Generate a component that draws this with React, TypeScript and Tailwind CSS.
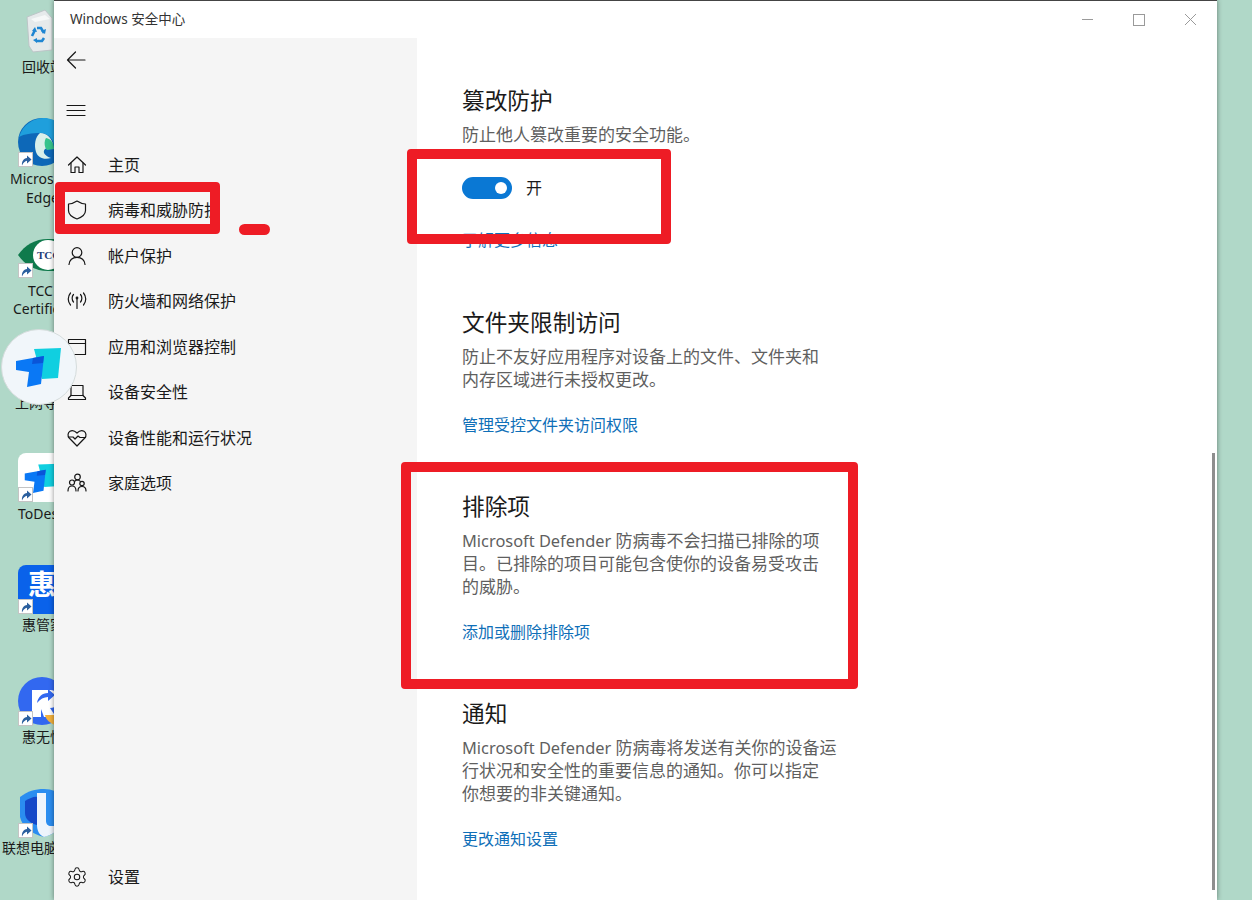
import React from 'react';
import { Settings } from 'lucide-react';

const Arrow = () => (
  <div className="absolute left-0 bottom-0 w-[15px] h-[15px] bg-white border border-[#c4c4c4] flex items-center justify-center">
    <svg width="12" height="12" viewBox="0 0 12 12">
      <path d="M2 11.500c-.5-4 1.500-7 5-7.500V1.500l4.500 4-4.500 4V6.800C5 7 3.300 8.800 2 11.500z" fill="#2a5f9e" />
    </svg>
  </div>
);

const DesktopLabel = ({ text, top, left }: { text: string; top: number; left: number }) => (
  <div className="absolute text-[14px] leading-[18px] text-[#1a1a1a] whitespace-nowrap" style={{ top, left }}>
    {text}
  </div>
);

const ToDeskMark = ({ size }: { size: number }) => (
  <svg width={size} height={size} viewBox="0 0 48 48">
    <path d="M19 6l27-1-3 30-16 1z" fill="#10cfe0" />
    <path d="M1 18l28-5-3 28-14 3 2-15-13-2z" fill="#0a78f5" />
    <path d="M18 15l11-2-1 7-11 1z" fill="#0a55d8" />
  </svg>
);

const Desktop = () => (
  <>
    {/* 回收站 */}
    <svg className="absolute left-[26px] top-[9px]" width="28" height="44" viewBox="0 0 28 44">
      <path d="M1 8L19 1l7 8v32l-19 2-4-6z" fill="#e6eaeb" stroke="#bcc5c7" />
      <path d="M5 10l14-4 5 4-15 3z" fill="#f6f8f8" />
      <g fill="none" stroke="#1f86d2" strokeWidth="2.600">
        <path d="M6 27l3-6M11 19h4l3 5M18 29l-2 3h-6" />
      </g>
      <path d="M15 22l4 3 1-5zM7 31l4-2 0 5zM6 22l5 1-2-5z" fill="#1f86d2" />
    </svg>
    <DesktopLabel text="回收站" top={58} left={22} />

    {/* Edge */}
    <div className="absolute left-[18px] top-[118px] w-[48px] h-[49px]">
      <svg width="48" height="48" viewBox="0 0 48 48">
        <circle cx="24" cy="24" r="24" fill="#0d68b8" />
        <path d="M1 19C5 6 16 0 26 0c12 0 22 9 22 22 0 5-5 9-12 9 1-9-5-16-14-16-8 0-16 1-21 4z" fill="#1f9fdc" />
        <path d="M22 15c7 0 12 5 13 12l-8 4c-3 3 0 7 6 9-7 2-13 0-15-6-2-7-1-15 4-19z" fill="#d9f0ea" />
        <path d="M28 20c5 1 8 5 8 11l-7 1c-3-3-3-9-1-12z" fill="#35c48c" />
      </svg>
      <Arrow />
    </div>
    <DesktopLabel text="Microsoft" top={170} left={10} />
    <DesktopLabel text="Edge" top={189} left={26} />

    {/* TCC */}
    <div className="absolute left-[18px] top-[239px] w-[48px] h-[39px]">
      <svg width="48" height="32" viewBox="0 0 48 32">
        <path d="M0 16C7 6 17 0 30 0h18v32H30C17 32 7 26 0 16z" fill="#0f7a4c" />
        <circle cx="30" cy="16" r="15" fill="#fff" />
        <text x="19" y="20" fontSize="11" fontWeight="700" fill="#1d3c78" fontFamily="Liberation Serif">TCC</text>
      </svg>
      <Arrow />
    </div>
    <DesktopLabel text="TCC" top={282} left={28} />
    <DesktopLabel text="Certificate" top={300} left={13} />

    {/* 上网导航 */}
    <DesktopLabel text="上网导" top={394} left={15} />

    {/* ToDesk */}
    <div className="absolute left-[18px] top-[453px] w-[48px] h-[49px] bg-white rounded-[8px] flex items-center justify-center">
      <ToDeskMark size={36} />
      <Arrow />
    </div>
    <DesktopLabel text="ToDesk" top={505} left={18} />

    {/* 惠管家 */}
    <div className="absolute left-[18px] top-[565px] w-[48px] h-[49px] bg-[#0a62ea] rounded-[8px] flex items-start justify-center pt-[5px] text-white text-[28px] font-bold leading-none">
      惠
      <Arrow />
    </div>
    <DesktopLabel text="惠管家" top={616} left={22} />

    {/* 惠无忧 */}
    <div className="absolute left-[18px] top-[677px] w-[48px] h-[49px]">
      <svg width="48" height="48" viewBox="0 0 48 48">
        <circle cx="24" cy="24" r="24" fill="#3268f0" />
        <path d="M14 13h18c6 0 9 4 9 9s-3 9-9 9l6 9H26l-3-8v8h-9z" fill="#fff" />
        <path d="M19 26c1-6 5-10 11-10v-4l7 6-7 6v-4c-4 0-8 2-11 6z" fill="#3268f0" />
        <path d="M27 38h20c-2 5-5 8-10 10-5-2-9-5-10-10z" fill="#f4b13c" />
      </svg>
      <Arrow />
    </div>
    <DesktopLabel text="惠无忧" top={728} left={22} />

    {/* 联想电脑管家 */}
    <div className="absolute left-[18px] top-[789px] w-[48px] h-[49px]">
      <svg width="48" height="48" viewBox="0 0 48 48">
        <path d="M2 8C10 2 17 0 26 0c8 0 14 3 20 7v22c0 10-10 16-20 19C14 45 4 38 2 28z" fill="#2b8df0" />
        <path d="M7 12c5-3 10-5 12-4v28c-7-2-12-6-12-12z" fill="#1548c8" />
        <path d="M19 4h9v28c0 3 2 5 5 5h9c-3 6-9 9-16 11-5-2-7-7-7-12z" fill="#eef4fc" />
      </svg>
      <Arrow />
    </div>
    <DesktopLabel text="联想电脑管家" top={839} left={2} />
  </>
);

const strokeProps = {
  fill: 'none',
  stroke: '#161616',
  strokeWidth: 1.2,
  strokeLinejoin: 'round' as const,
  strokeLinecap: 'round' as const,
};

const NavIcon = ({ children }: { children: React.ReactNode }) => (
  <svg width="20" height="20" viewBox="0 0 20 20" {...strokeProps}>
    {children}
  </svg>
);

const navItems: { label: string; icon: React.ReactNode }[] = [
  {
    label: '主页',
    icon: (
      <>
        <path d="M1.500 10L10 2l8.500 8" />
        <path d="M4 8v9.500h4v-5.500h4v5.500h4V8" />
      </>
    ),
  },
  {
    label: '病毒和威胁防护',
    icon: <path d="M10 1c3 2 5.800 2.800 8.500 3v6.500c0 4-3.800 6.800-8.500 8.500-4.700-1.700-8.500-4.500-8.500-8.500V4C4.200 3.800 7 3 10 1z" />,
  },
  {
    label: '帐户保护',
    icon: (
      <>
        <circle cx="10" cy="6.500" r="4.800" />
        <path d="M2 18.500c.5-4.500 3.500-7.200 8-7.200s7.500 2.700 8 7.200" />
      </>
    ),
  },
  {
    label: '防火墙和网络保护',
    icon: (
      <>
        <path d="M10 7.500v10" />
        <circle cx="10" cy="7" r=".8" />
        <path d="M6.500 3.500c-1.800 2-1.800 5.500 0 7.500M13.500 3.500c1.800 2 1.800 5.500 0 7.500" />
        <path d="M3.500 2c-3 3.500-3 8.500 0 12M16.500 2c3 3.500 3 8.500 0 12" />
      </>
    ),
  },
  {
    label: '应用和浏览器控制',
    icon: (
      <>
        <rect x="1.500" y="2.500" width="17" height="15" />
        <path d="M1.500 6.500h17" />
      </>
    ),
  },
  {
    label: '设备安全性',
    icon: (
      <>
        <path d="M4 3.500h12v10H4z" />
        <path d="M4 13.500l-2.500 2.500v1.500h17V16L16 13.500" />
      </>
    ),
  },
  {
    label: '设备性能和运行状况',
    icon: (
      <>
        <path d="M10 18L2.200 10C.3 8 .8 4.500 3 3.200 5.500 1.800 8 3 10 5c2-2 4.500-3.200 7-1.800 2.200 1.300 2.700 4.800.8 6.800z" />
        <path d="M1.500 9H6l2 2 3-3 2 1.500h5.500" />
      </>
    ),
  },
  {
    label: '家庭选项',
    icon: (
      <>
        <circle cx="10.500" cy="4" r="2.800" />
        <circle cx="5" cy="9.500" r="2.500" />
        <circle cx="15" cy="10.500" r="2.200" />
        <path d="M1 18c0-3 1.500-5 4-5s4 2 4 5M11 18c0-2.500 1.500-4.500 4-4.500s4 2 4 4.500" />
        <path d="M8 8c.7-.7 1.500-1 2.500-1 1 0 2 .4 2.800 1.300" />
      </>
    ),
  },
];

const NavRow = ({ icon, label }: { icon: React.ReactNode; label: string }) => (
  <div className="flex items-center h-[45.5px] pl-[13px]">
    <div className="w-[20px] h-[20px] mr-[21px]">{icon}</div>
    <span className="text-[16px] text-[#1a1a1a] whitespace-nowrap">{label}</span>
  </div>
);

const Sidebar = () => (
  <aside className="w-[363px] h-[862px] shrink-0 bg-[#f5f5f5] flex flex-col">
    <div className="pl-[12px] pt-[12px]">
      <svg width="20" height="20" viewBox="0 0 20 20" {...strokeProps}>
        <path d="M19 10H1.500M9.500 2l-8 8 8 8" />
      </svg>
    </div>
    <div className="pl-[12px] pt-[30px]">
      <svg width="20" height="20" viewBox="0 0 20 20" {...strokeProps}>
        <path d="M1 5.500h18M1 10.500h18M1 15.500h18" />
      </svg>
    </div>
    <nav className="mt-[22px]">
      {navItems.map((item) => (
        <NavRow key={item.label} label={item.label} icon={<NavIcon>{item.icon}</NavIcon>} />
      ))}
    </nav>
    <div className="mt-auto">
      <NavRow label="设置" icon={<Settings size={22} strokeWidth={1.1} color="#161616" className="-m-[1px]" />} />
    </div>
  </aside>
);

const Defender = () => <span className="text-[16.400px]">Microsoft Defender </span>;

const Section = ({
  title,
  lines,
  link,
  className,
}: {
  title: string;
  lines: React.ReactNode[];
  link: string;
  className: string;
}) => (
  <section className={className}>
    <h2 className="text-[22.700px] leading-[32px] text-[#1a1a1a]">{title}</h2>
    <div className="mt-[6px] text-[17px] leading-[23px] text-[#5f5f5f]">
      {lines.map((line, i) => (
        <div key={i} className="whitespace-nowrap">{line}</div>
      ))}
    </div>
    <div className="mt-[23px] text-[16px] leading-[23px] text-[#0f6fb8]">{link}</div>
  </section>
);

const Content = () => (
  <main className="flex-1 bg-white pl-[45px] pt-[47px]">
    <section>
      <h2 className="text-[22.700px] leading-[32px] text-[#1a1a1a]">篡改防护</h2>
      <p className="mt-[6px] text-[17px] leading-[23px] text-[#5f5f5f] whitespace-nowrap">防止他人篡改重要的安全功能。</p>
      <div className="mt-[31px] flex items-center h-[22px]">
        <div className="w-[50px] h-[22px] rounded-full bg-[#0a78d4] flex items-center justify-end pr-[5px]">
          <div className="w-[12px] h-[12px] rounded-full bg-white" />
        </div>
        <span className="ml-[14px] text-[16px] text-[#1a1a1a]">开</span>
      </div>
      <div className="mt-[30px] text-[16px] leading-[23px] text-[#0f6fb8]">了解更多信息</div>
    </section>
    <Section
      className="mt-[55px]"
      title="文件夹限制访问"
      lines={['防止不友好应用程序对设备上的文件、文件夹和', '内存区域进行未授权更改。']}
      link="管理受控文件夹访问权限"
    />
    <Section
      className="mt-[54px]"
      title="排除项"
      lines={[
        <><Defender />防病毒不会扫描已排除的项</>,
        '目。已排除的项目可能包含使你的设备易受攻击',
        '的威胁。',
      ]}
      link="添加或删除排除项"
    />
    <Section
      className="mt-[54px]"
      title="通知"
      lines={[
        <><Defender />防病毒将发送有关你的设备运</>,
        '行状况和安全性的重要信息的通知。你可以指定',
        '你想要的非关键通知。',
      ]}
      link="更改通知设置"
    />
  </main>
);

const TitleBar = () => (
  <div className="h-[37px] bg-white flex items-center pl-[16px] relative">
    <span className="text-[13.500px] text-[#333]">Windows 安全中心</span>
    <div className="ml-auto flex items-center gap-[40px] pr-[21px] text-[#9a9a9a]">
      <svg width="11" height="11" viewBox="0 0 11 11" stroke="currentColor" fill="none"><path d="M0 5.500h11" /></svg>
      <svg width="12" height="12" viewBox="0 0 12 12" stroke="currentColor" fill="none"><rect x=".5" y=".5" width="11" height="11" /></svg>
      <svg width="11" height="11" viewBox="0 0 11 11" stroke="currentColor" fill="none"><path d="M0 0l11 11M11 0L0 11" /></svg>
    </div>
  </div>
);

export default function App() {
  return (
    <div
      className="relative w-[1252px] h-[900px] overflow-hidden bg-[#b0d8c8]"
      style={{ fontFamily: '"Noto Sans", "Noto Sans CJK SC", sans-serif' }}
    >
      <Desktop />

      <div className="absolute left-[54px] top-0 w-[1163px] h-[900px] border-t border-t-[#444] bg-white shadow-[0_0_5px_rgba(0,0,0,0.45)] flex flex-col overflow-hidden">
        <TitleBar />
        <div className="flex flex-1 min-h-0">
          <Sidebar />
          <Content />
        </div>
        {/* scrollbar */}
        <div className="absolute left-[1158px] top-[452px] w-[3px] h-[437px] bg-[#8e8e8e]" />
      </div>

      {/* ToDesk floating button */}
      <div className="absolute left-[1px] top-[329px] w-[76px] h-[76px] rounded-full bg-[#f1f6fa] border border-[#d5dcdc] flex items-center justify-center">
        <ToDeskMark size={48} />
      </div>

      {/* red annotations */}
      <div className="absolute left-[55px] top-[182px] w-[165px] h-[52px] border-[10px] border-[#ee1c25] rounded-[4px]" />
      <div className="absolute left-[239px] top-[224px] w-[31px] h-[11px] bg-[#ee1c25] rounded-full" />
      <div className="absolute left-[407px] top-[149px] w-[264px] h-[95px] border-[10px] border-[#ee1c25] rounded-[4px]" />
      <div className="absolute left-[401px] top-[462px] w-[457px] h-[227px] border-[10px] border-[#ee1c25] rounded-[4px]" />
    </div>
  );
}
